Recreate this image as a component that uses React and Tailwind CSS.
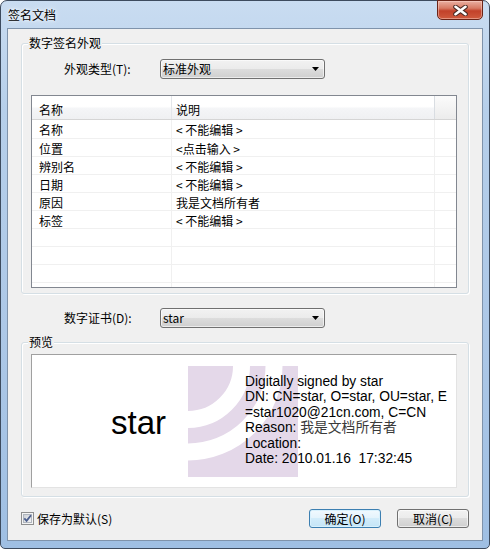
import React from "react";

const cjk = "font-['Noto_Sans_CJK_SC',sans-serif]";
const latin = "font-['Liberation_Sans',Arial,sans-serif]";

function Combo({ text }) {
  return (
    <div className="w-[165px] h-[20px] rounded-[3px] border border-[#707070] bg-[linear-gradient(#f2f2f2,#ebebeb_50%,#dddddd_50%,#cfcfcf)] shadow-[inset_0_0_0_1px_rgba(255,255,255,0.6)] flex items-center pl-[2px] pr-[5px]">
      <span className="flex-1 text-[12px] leading-[14px] text-black">{text}</span>
      <svg width="7" height="4" viewBox="0 0 7 4">
        <path d="M0 0H7L3.5 4Z" fill="#000" />
      </svg>
    </div>
  );
}

function Group({ label, className, children }) {
  return (
    <div
      className={
        "relative border border-[#d5dfe5] rounded-[3px] shadow-[inset_1px_1px_0_#fff,1px_1px_0_#fff] " +
        className
      }
    >
      <span className="absolute -top-[8px] left-[6px] bg-[#f0f0f0] px-[1px] text-[12px] leading-[14px] text-black">
        {label}
      </span>
      {children}
    </div>
  );
}

const rows = [
  ["名称", "< 不能编辑 >"],
  ["位置", "<点击输入 >"],
  ["辨别名", "< 不能编辑 >"],
  ["日期", "< 不能编辑 >"],
  ["原因", "我是文档所有者"],
  ["标签", "< 不能编辑 >"],
  ["", ""],
  ["", ""],
  ["", ""],
  ["", ""],
];

function Button({ children, primary }) {
  return (
    <div
      className={
        "w-[72px] h-[19px] rounded-[3px] border flex items-center justify-center text-[12px] leading-[14px] text-black " +
        (primary
          ? "border-[#3c7fb1] bg-[linear-gradient(#f1f9fe,#e3f3fc_50%,#d2ecfa_50%,#c4e5f7)] shadow-[inset_0_0_0_1px_#d8f1fd]"
          : "border-[#707070] bg-[linear-gradient(#f2f2f2,#ebebeb_50%,#dddddd_50%,#cfcfcf)] shadow-[inset_0_0_0_1px_rgba(255,255,255,0.6)]")
      }
    >
      {children}
    </div>
  );
}

export default function App() {
  return (
    <div className={"w-[490px] h-[549px] bg-white " + cjk}>
      <div className="relative w-[490px] h-[549px] rounded-t-[7px] rounded-b-[5px] border border-[#3d4b5e] bg-[linear-gradient(180deg,#c9dcf1,#b6cfea_20%,#adc8e7_60%,#9fbfe3)] px-[6px] pb-[7px] flex flex-col">
        {/* title bar */}
        <div className="h-[27px] flex items-center pl-[1px]">
          <span className="text-[12px] leading-[14px] text-black [text-shadow:0_0_6px_#fff,0_0_3px_#fff]">
            签名文档
          </span>
        </div>
        {/* close button */}
        <div className="absolute left-[436px] -top-[1px] w-[46px] h-[20px] rounded-b-[5px] border border-[#6b2417] bg-[linear-gradient(#eab0a2,#d77a64_40%,#c2412a_55%,#cf5a3e)] shadow-[inset_0_0_0_1px_rgba(255,220,210,0.45)] flex items-center justify-center">
          <svg width="15" height="11" viewBox="0 0 15 11">
            <path d="M2.5 1.8L12.5 9.2M12.5 1.8L2.5 9.2" stroke="#4a2a24" strokeWidth="4.6" strokeLinecap="round" />
            <path d="M2.5 1.8L12.5 9.2M12.5 1.8L2.5 9.2" stroke="#fff" strokeWidth="2.6" strokeLinecap="round" />
          </svg>
        </div>

        {/* client */}
        <div className="flex-1 border border-[#7f93ab] bg-[#f0f0f0] px-[13px] flex flex-col">
          <Group label="数字签名外观" className="mt-[14px] h-[251px]">
            <div className="pt-[15px] flex items-center h-[35px]">
              <span className="w-[138px] pl-[42px] text-[12px] leading-[14px] text-black">外观类型(T):</span>
              <Combo text="标准外观" />
            </div>
            {/* list */}
            <div className="mt-[16px] ml-[9px] w-[426px] h-[193px] border border-[#828790] bg-white overflow-hidden flex flex-col">
              <div className="h-[24px] shrink-0 flex border-b border-[#d5d5d5] bg-[linear-gradient(#ffffff,#ffffff_45%,#f4f5f7_55%,#eff0f2)] text-[12px] leading-[14px] text-black">
                <div className="w-[140px] pl-[7px] pt-[4px] flex items-center border-r border-[#e3e6ea]">名称</div>
                <div className="w-[263px] pl-[4px] pt-[4px] flex items-center border-r border-[#d9dde2]">说明</div>
                <div className="flex-1 bg-[linear-gradient(#fbfbfb,#ececec)]" />
              </div>
              {rows.map((r, i) => (
                <div
                  key={i}
                  className={
                    "shrink-0 flex border-b border-[#f0f0f0] text-[12px] leading-[16px] text-black " +
                    (i === 0 ? "h-[19px]" : "h-[18px]")
                  }
                >
                  <div className="w-[140px] pl-[7px] pt-[2px] border-r border-[#f0f0f0] whitespace-pre">{r[0]}</div>
                  <div className="w-[263px] pl-[4px] pt-[2px] border-r border-[#f0f0f0] whitespace-pre">{r[1]}</div>
                  <div className="flex-1" />
                </div>
              ))}
            </div>
          </Group>

          <div className="mt-[14px] h-[20px] flex items-center">
            <span className="w-[139px] pl-[43px] text-[12px] leading-[14px] text-black">数字证书(D):</span>
            <Combo text="star" />
          </div>

          <Group label="预览" className="mt-[14px] h-[155px]">
            <div className="pt-[11px] pl-[9px]">
              <div className="relative w-[426px] h-[134px] border border-t-[#a0a0a0] border-l-[#a0a0a0] border-b-[#e3e3e3] border-r-[#e3e3e3] bg-white flex overflow-hidden">
                <svg className="absolute left-[156px] top-[11px]" width="110" height="111" viewBox="0 0 110 111">
                  <rect x="0" y="0" width="110" height="111" fill="#e4d8e9" />
                  <circle cx="0" cy="0" r="53.5" fill="none" stroke="#fff" strokeWidth="17" />
                  <circle cx="0" cy="0" r="86" fill="none" stroke="#fff" strokeWidth="17" />
                </svg>
                <div className={"relative w-[213px] pt-[51px] text-center text-[33px] leading-[33px] text-black " + latin}>
                  star
                </div>
                <div className={"relative pt-[19px] text-[13.8px] leading-[15.4px] text-black whitespace-pre " + latin}>
                  <div>Digitally signed by star</div>
                  <div>DN: CN=star, O=star, OU=star, E</div>
                  <div>=star1020@21cn.com, C=CN</div>
                  <div>
                    Reason: <span className={"text-[13.8px] leading-[12px] text-[#3a3a3a] " + cjk}>我是文档所有者</span>
                  </div>
                  <div>Location:</div>
                  <div>Date: 2010.01.16  17:32:45</div>
                </div>
              </div>
            </div>
          </Group>

          <div className="mt-[12px] h-[19px] flex items-center">
            <svg width="13" height="13" viewBox="0 0 13 13">
              <defs>
                <linearGradient id="cbg" x1="0" y1="0" x2="1" y2="1">
                  <stop offset="0" stopColor="#cbcfd5" />
                  <stop offset="1" stopColor="#f6f6f6" />
                </linearGradient>
              </defs>
              <rect x="0.5" y="0.5" width="12" height="12" fill="#f4f4f4" stroke="#8e8f8f" />
              <rect x="2.5" y="2.5" width="8" height="8" fill="url(#cbg)" stroke="#b0b6be" />
              <path d="M3.3 6.3L5.6 8.8L10 3.2" fill="none" stroke="#4c5f8e" strokeWidth="1.8" />
            </svg>
            <span className="ml-[3px] text-[12px] leading-[14px] text-black">保存为默认(S)</span>
            <div className="flex-1" />
            <Button primary>确定(O)</Button>
            <div className="w-[16px]" />
            <Button>取消(C)</Button>
          </div>
        </div>
      </div>
    </div>
  );
}
